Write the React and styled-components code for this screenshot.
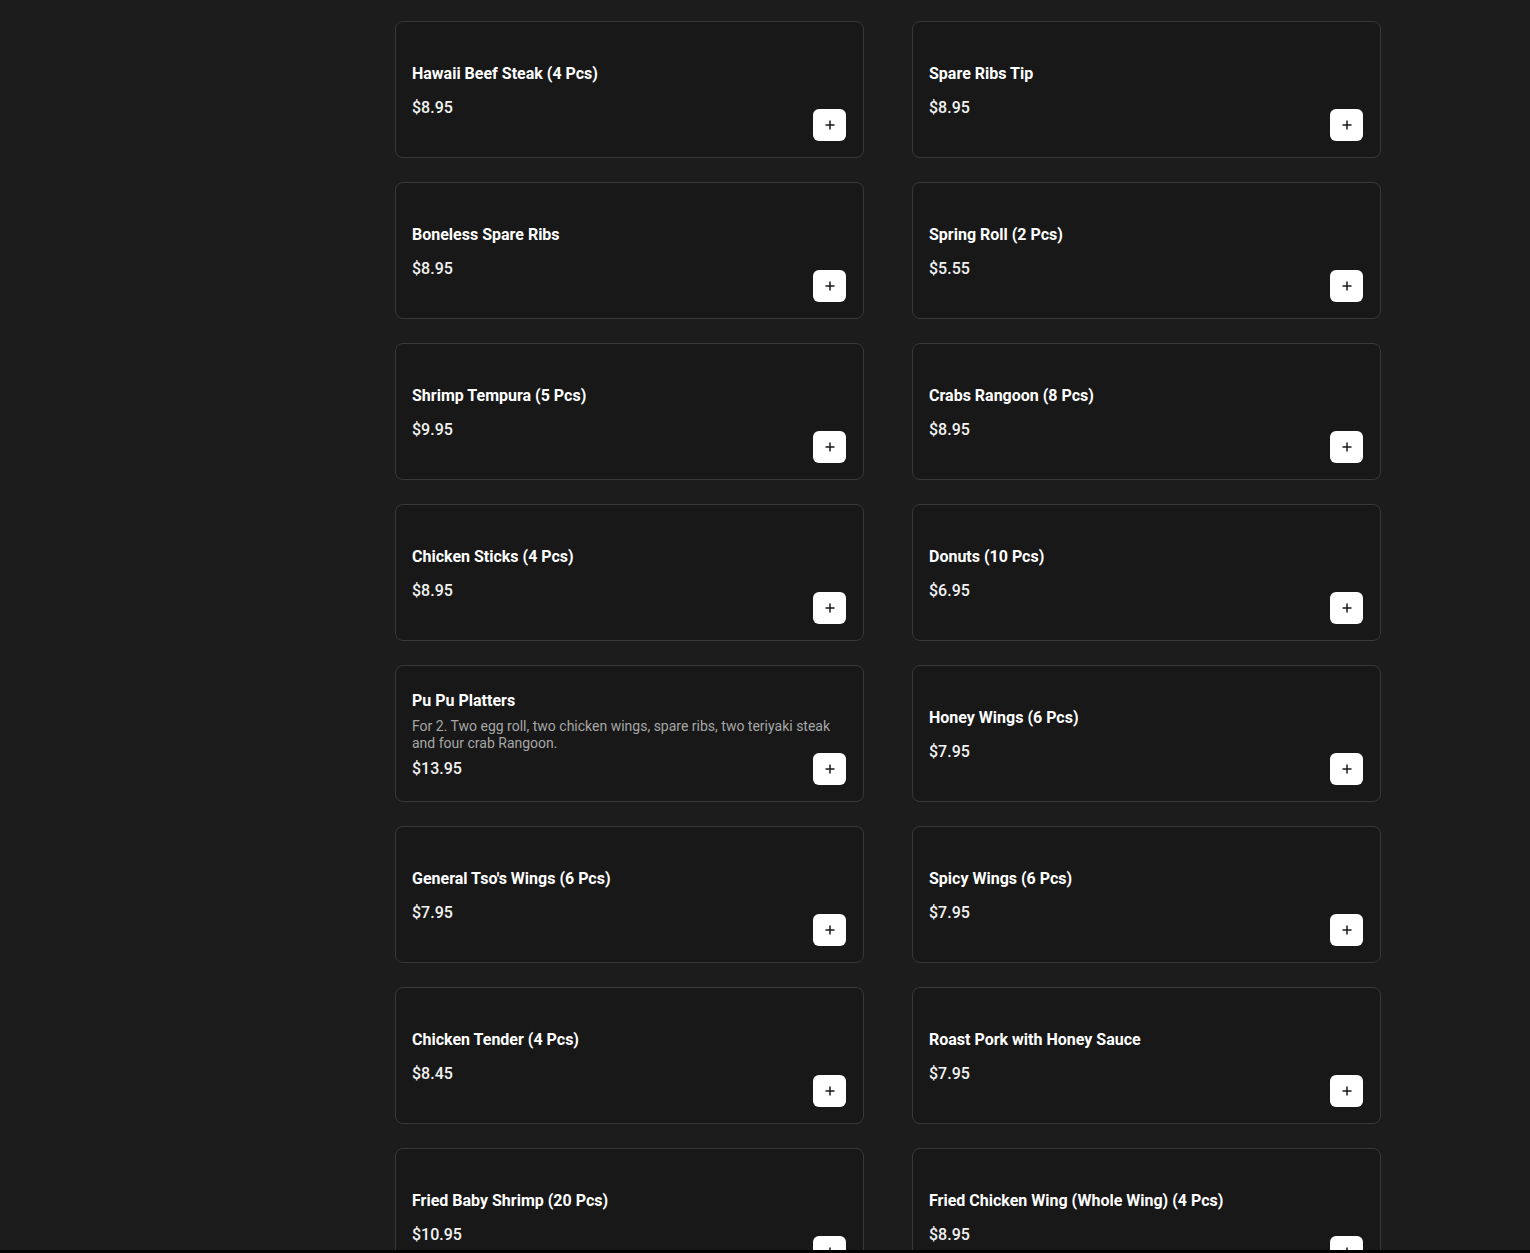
import React from "react";
import styled, { createGlobalStyle } from "styled-components";

const Global = createGlobalStyle`
  html, body { margin: 0; padding: 0; background: #1c1c1c; }
  body { font-family: Roboto, "Liberation Sans", Arial, sans-serif; color: #fff; }
  * { box-sizing: border-box; }
`;

const Page = styled.div`
  display: grid;
  grid-template-columns: 395px 986px 1fr;
  padding-top: 21px;
  min-height: 1253px;
`;

const Sidebar = styled.aside``;

const Grid = styled.div`
  display: grid;
  grid-template-columns: 469px 469px;
  column-gap: 48px;
  row-gap: 24px;
  align-content: start;
`;

const Card = styled.div`
  display: grid;
  grid-template-columns: 1fr;
  grid-template-rows: 1fr;
  min-height: 137px;
  padding: 16px;
  background: #181818;
  border: 1px solid #383838;
  border-radius: 8px;
`;

const Info = styled.div`
  grid-area: 1 / 1;
  display: flex;
  flex-direction: column;
  justify-content: center;
  padding-top: 2px;
  min-width: 0;
`;

const Title = styled.div`
  font-size: 16px;
  line-height: 24px;
  font-weight: 700;
  color: #ffffff;
`;

const Desc = styled.div`
  margin-top: 5px;
  font-size: 14px;
  line-height: 17px;
  color: #a6a6a6;
`;

const Price = styled.div`
  margin-top: ${(p) => (p.$tight ? "5px" : "10px")};
  font-size: 16px;
  line-height: 24px;
  font-weight: 500;
  color: #f2f2f2;
`;

const AddButton = styled.button`
  grid-area: 1 / 1;
  justify-self: end;
  align-self: end;
  width: 33px;
  height: 32px;
  margin-right: 1px;
  border: none;
  border-radius: 6px;
  background: #ffffff;
  display: flex;
  align-items: center;
  justify-content: center;
  padding: 0;
  cursor: pointer;
`;

const BottomBar = styled.div`
  position: fixed;
  left: 0;
  right: 0;
  bottom: 0;
  height: 3px;
  background: #000;
`;

const items = [
  { name: "Hawaii Beef Steak (4 Pcs)", price: "$8.95" },
  { name: "Spare Ribs Tip", price: "$8.95" },
  { name: "Boneless Spare Ribs", price: "$8.95" },
  { name: "Spring Roll (2 Pcs)", price: "$5.55" },
  { name: "Shrimp Tempura (5 Pcs)", price: "$9.95" },
  { name: "Crabs Rangoon (8 Pcs)", price: "$8.95" },
  { name: "Chicken Sticks (4 Pcs)", price: "$8.95" },
  { name: "Donuts (10 Pcs)", price: "$6.95" },
  {
    name: "Pu Pu Platters",
    desc: "For 2. Two egg roll, two chicken wings, spare ribs, two teriyaki steak and four crab Rangoon.",
    price: "$13.95",
  },
  { name: "Honey Wings (6 Pcs)", price: "$7.95" },
  { name: "General Tso's Wings (6 Pcs)", price: "$7.95" },
  { name: "Spicy Wings (6 Pcs)", price: "$7.95" },
  { name: "Chicken Tender (4 Pcs)", price: "$8.45" },
  { name: "Roast Pork with Honey Sauce", price: "$7.95" },
  { name: "Fried Baby Shrimp (20 Pcs)", price: "$10.95" },
  { name: "Fried Chicken Wing (Whole Wing) (4 Pcs)", price: "$8.95" },
];

const Plus = () => (
  <svg width="12" height="12" viewBox="0 0 12 12">
    <path d="M6 1.5v9M1.5 6h9" stroke="#1a1a1a" strokeWidth="1.5" />
  </svg>
);

export default function App() {
  return (
    <>
      <Global />
      <Page>
        <Sidebar />
        <Grid>
          {items.map((it) => (
            <Card key={it.name}>
              <Info>
                <Title>{it.name}</Title>
                {it.desc && <Desc>{it.desc}</Desc>}
                <Price $tight={!!it.desc}>{it.price}</Price>
              </Info>
              <AddButton aria-label="Add">
                <Plus />
              </AddButton>
            </Card>
          ))}
        </Grid>
      </Page>
      <BottomBar />
    </>
  );
}
